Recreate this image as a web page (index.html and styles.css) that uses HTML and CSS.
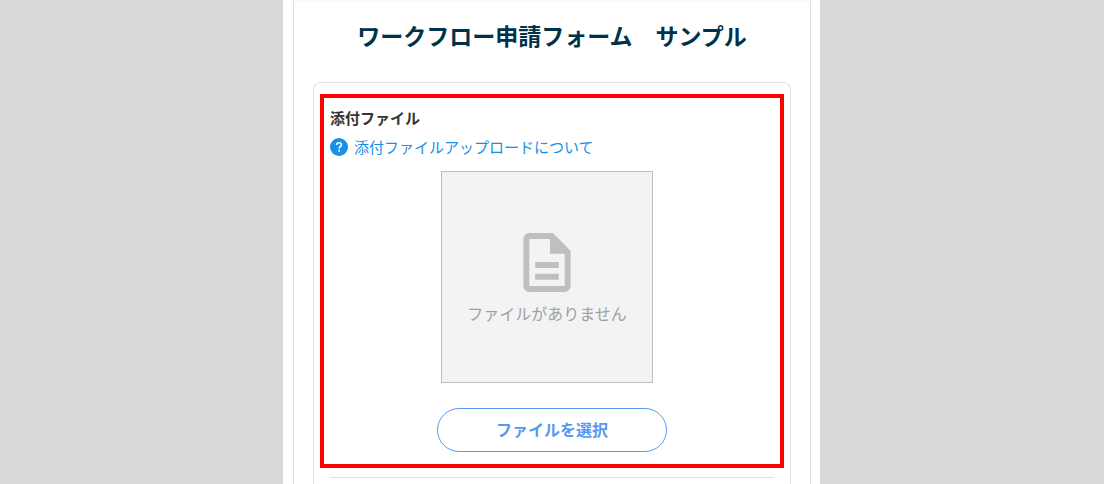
FILE: index.html
```html
<!DOCTYPE html>
<html lang="ja">
<head>
    <meta charset="UTF-8">
    <meta name="viewport" content="width=device-width, initial-scale=1.0">
    <title>ワークフロー申請フォーム　サンプル</title>
    <link rel="stylesheet" href="styles.css">
</head>
<body>
    <div class="page">
        <main class="sheet">
            <h1 class="form-title">ワークフロー申請フォーム　サンプル</h1>

            <form class="card">
                <section class="field highlight">
                    <label class="field-label" for="select-file">添付ファイル</label>
                    <a class="help-link" href="#">
                        <svg class="help-icon" viewBox="0 0 18 18">
                            <circle cx="9" cy="9" r="9" fill="#1890e6"/>
                            <path d="M6.600 7.100C6.600 5.600 7.600 4.700 9 4.700s2.400.8 2.400 2.100c0 1.700-2.300 1.800-2.300 3.700" fill="none" stroke="#fff" stroke-width="1.6"/>
                            <rect x="8.2" y="11.8" width="1.8" height="1.8" fill="#fff"/>
                        </svg>
                        <span>添付ファイルアップロードについて</span>
                    </a>

                    <!-- Empty preview -->
                    <div class="preview">
                        <svg class="file-icon" viewBox="0 0 48 60">
                            <path fill="#bfbfbf" fill-rule="evenodd" d="M6 0H30L48 18V54a6 6 0 0 1-6 6H6a6 6 0 0 1-6-6V6a6 6 0 0 1 6-6zM6 6V54H42V21H27V6z"/>
                            <path fill="#bfbfbf" d="M12 29.500h24v6H12zM12 41.500h24v6H12z"/>
                        </svg>
                        <p class="preview-text">ファイルがありません</p>
                    </div>

                    <button class="select-btn" type="button" id="select-file">ファイルを選択</button>
                </section>
                <hr class="divider">
            </form>
        </main>
    </div>
</body>
</html>
```
FILE: styles.css
```css
* {
    margin: 0;
    padding: 0;
    box-sizing: border-box;
}

body {
    display: flex;
    justify-content: center;
    min-height: 100vh;
    padding-right: 1px;
    background: #d9d9d9;
    color: #333;
    font-family: "Noto Sans CJK JP", sans-serif;
    font-size: 15px;
    line-height: 22px;
}

.page {
    display: flex;
    width: 100%;
    max-width: 537px;
    padding: 0 9px 0 10px;
    background: #fff;
}

.sheet {
    display: flex;
    flex-direction: column;
    flex: 1;
    padding: 18px 19px 0;
    border: solid #e0e0e0;
    border-width: 0 1px;
    background: linear-gradient(#f8f8f8, #fff 3px);
}

.form-title {
    margin-bottom: 30px;
    color: #003349;
    font-size: 23px;
    line-height: 34px;
    text-align: center;
}

.card {
    flex: 1;
    padding: 11px 6px 0;
    border: 1px solid #e0e0e0;
    border-bottom: 0;
    border-radius: 8px 8px 0 0;
}

.field {
    display: flex;
    flex-direction: column;
    align-items: center;
    padding: 9px 6px 12px;
}

.highlight {
    border: 4px solid #f00;
}

.field-label {
    align-self: flex-start;
    margin-bottom: 7px;
    font-weight: bold;
}

.help-link {
    display: flex;
    align-items: center;
    align-self: flex-start;
    gap: 6px;
    margin-bottom: 13px;
    color: #1890e6;
    text-decoration: none;
}

.help-icon {
    width: 18px;
    height: 18px;
}

.preview {
    display: flex;
    flex-direction: column;
    align-items: center;
    gap: 10px;
    width: 212px;
    height: 212px;
    margin: 0 10px 25px 0;
    padding-top: 61px;
    border: 1px solid #bfbfbf;
    background: #f3f3f3;
}

.file-icon {
    width: 48px;
    height: 59px;
}

.preview-text {
    color: #a0a0a0;
    font-size: 16px;
}

.select-btn {
    width: 230px;
    height: 44px;
    padding-bottom: 2px;
    border: 1px solid #5898f0;
    border-radius: 22px;
    background: #fff;
    color: #5898f0;
    font-family: inherit;
    font-size: 16px;
    font-weight: bold;
    cursor: pointer;
}

.divider {
    margin: 9px 10px 0;
    border: 0;
    border-top: 1px solid #e0e0e0;
}
```
